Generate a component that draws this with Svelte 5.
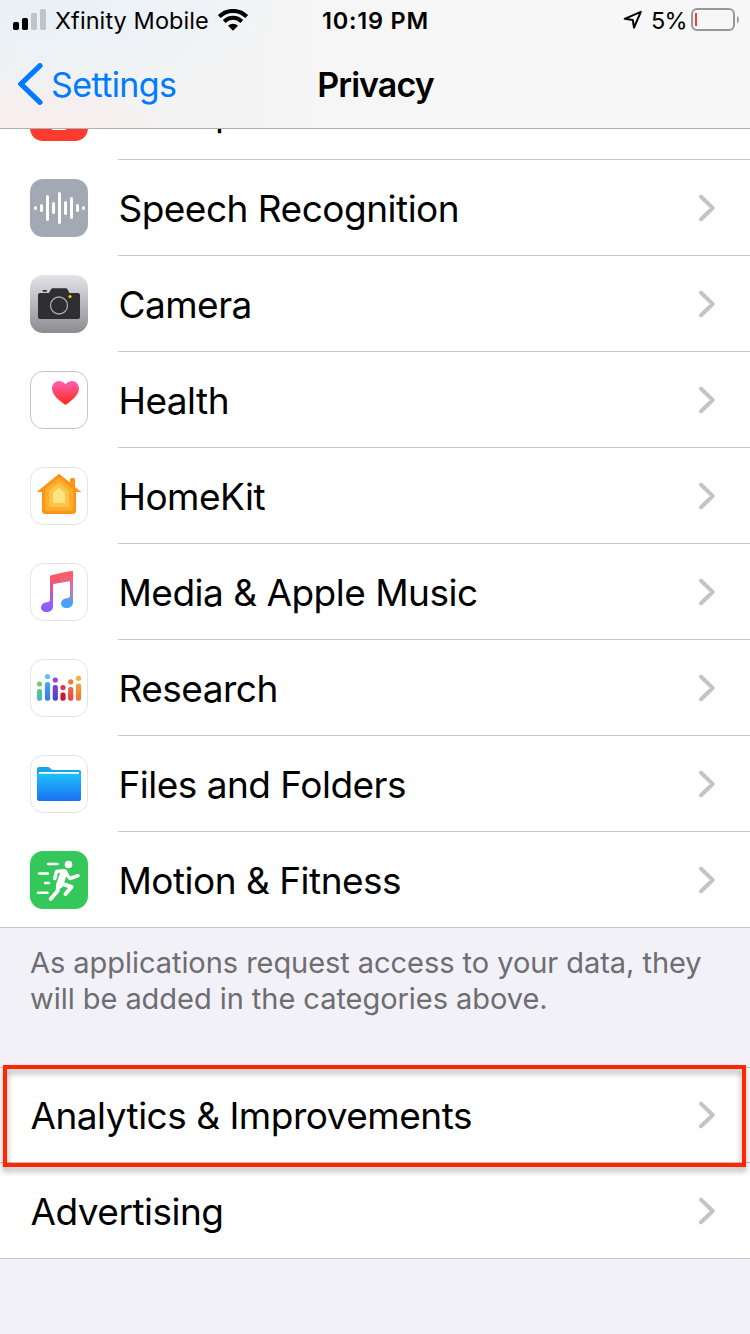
<script>
	const rows = [
		{ icon: 'microphone', label: 'Microphone' },
		{ icon: 'speech', label: 'Speech Recognition' },
		{ icon: 'camera', label: 'Camera' },
		{ icon: 'health', label: 'Health' },
		{ icon: 'home', label: 'HomeKit' },
		{ icon: 'music', label: 'Media & Apple Music' },
		{ icon: 'research', label: 'Research' },
		{ icon: 'files', label: 'Files and Folders' },
		{ icon: 'motion', label: 'Motion & Fitness' }
	];

	// x, half height
	const wave = [
		[5.5, 2], [11.5, 4], [17.5, 13], [23.5, 6], [29.5, 16],
		[35.5, 7], [41.5, 11], [47.5, 4], [53.5, 2]
	];

	// x, dot y, bar top, bar fill, dot fill
	const people = [
		[9.5, 25, 30, 'url(#r1)', '#6fce75'],
		[17.5, 17.5, 23, 'url(#r2)', '#5ac3ef'],
		[25.3, 21, 26, 'url(#r3)', '#9746d1'],
		[33, 28.5, 33.5, '#c81634', '#df3450'],
		[40.7, 22.8, 28, 'url(#r4)', '#ed793a'],
		[48.5, 19.3, 24.5, 'url(#r5)', '#f4b13b']
	];
</script>

{#snippet chevron()}
	<svg class="chevron" width="18" height="28" viewBox="0 0 18 28">
		<path d="M3 2.7 14.8 14 3 25.3" fill="none" stroke="#c4c4c6" stroke-width="4" stroke-linecap="round" stroke-linejoin="round" />
	</svg>
{/snippet}

<div class="screen">
	<header>
		<div class="status">
			<div class="carrier">
				<svg width="34" height="22" viewBox="0 0 34 22">
					<rect x="0" y="13" width="6" height="8" rx="1.7" />
					<rect x="9" y="9" width="6" height="12" rx="1.7" />
					<rect x="18" y="4" width="6" height="17" rx="1.7" fill="#bfc4c7" />
					<rect x="27" y="0" width="6" height="21" rx="1.7" fill="#bfc4c7" />
				</svg>
				<span>Xfinity Mobile</span>
				<svg class="wifi" width="30" height="22" viewBox="0 0 30 22">
					<g fill="none" stroke="#000" stroke-width="4">
						<path d="M1.3 7.6a19.3 19.3 0 0 1 27.4 0" />
						<path d="M6.2 12.5a12.4 12.4 0 0 1 17.6 0" />
					</g>
					<path d="m15 21.7-5-5a7.1 7.1 0 0 1 10 0z" />
				</svg>
			</div>
			<div class="time">10:19 PM</div>
			<div class="power">
				<svg class="location" width="20" height="20" viewBox="0 0 20 20">
					<path d="M1.7 8.8 17.8 1.8 11 17.7 9.8 10z" fill="none" stroke="#000" stroke-width="2" stroke-linejoin="round" />
				</svg>
				<span>5%</span>
				<svg width="49" height="24" viewBox="0 0 49 24">
					<rect x="1" y="1" width="42" height="21" rx="5" fill="none" stroke="#98989a" stroke-width="2" />
					<rect x="4" y="5" width="2" height="13" fill="#ff3b30" />
					<path d="M46 8q2 1.2 2 3.7t-2 3.7z" fill="#98989a" />
				</svg>
			</div>
		</div>
		<nav>
			<a href="#settings">
				<svg width="26" height="42" viewBox="0 0 26 42">
					<path d="M22 2.7 3 21l19 18.3" fill="none" stroke="#007aff" stroke-width="5.2" stroke-linecap="round" stroke-linejoin="miter" />
				</svg>
				<span>Settings</span>
			</a>
			<h1>Privacy</h1>
		</nav>
	</header>

	<main>
		<ul class="apps">
			{#each rows as row}
				<li>
					<svg class="icon {row.icon}" width="58" height="58" viewBox="0 0 58 58">
						{#if row.icon === 'microphone'}
							<rect width="58" height="58" rx="13" fill="#ff3b30" />
							<rect x="22" y="8" width="14" height="25" rx="7" fill="#fff" />
							<path d="M17 26c0 16 24 16 24 0M29 38v8M22 45.5h14" fill="none" stroke="#fff" stroke-width="3" />
						{:else if row.icon === 'speech'}
							<rect width="58" height="58" rx="13" fill="#a2a9b3" />
							{#each wave as [x, h]}
								<rect x={x - 1.5} y={29 - h} width="3" height={h * 2} rx="1.5" fill="#fff" />
							{/each}
						{:else if row.icon === 'camera'}
							<defs>
								<linearGradient id="cam" x2="0" y2="1">
									<stop stop-color="#e4e3ea" />
									<stop offset="1" stop-color="#8d8b91" />
								</linearGradient>
							</defs>
							<rect width="58" height="58" rx="13" fill="url(#cam)" />
							<path d="M10 18h8.5c1.5 0 2-4.7 4-4.7H36c2 0 2.5 4.7 4 4.7h8a2 2 0 0 1 2 2v22a2 2 0 0 1-2 2H10a2 2 0 0 1-2-2V20a2 2 0 0 1 2-2z" fill="#2f2e30" />
							<rect x="12.5" y="15" width="4.5" height="1.8" rx=".8" fill="#2f2e30" />
							<circle cx="29" cy="30.5" r="8.5" fill="none" stroke="#aaa9ad" stroke-width="1.3" />
							<circle cx="40" cy="21.5" r="1.6" fill="#ffcc00" />
						{:else if row.icon === 'health'}
							<defs>
								<linearGradient id="heart" x2="0" y2="1">
									<stop stop-color="#ff62b4" />
									<stop offset="1" stop-color="#ff2718" />
								</linearGradient>
							</defs>
							<rect x=".5" y=".5" width="57" height="57" rx="12.5" fill="#fff" stroke="#c6c6c8" />
							<path d="M35.500 34C28 28.500 22 23.500 22 17.500c0-4.500 3.300-7.600 7-7.600 2.700 0 5 1.300 6.500 3.400 1.500-2.100 3.800-3.400 6.500-3.400 3.700 0 7 3.100 7 7.600 0 6-6 11-13.500 16.500z" fill="url(#heart)" />
						{:else if row.icon === 'home'}
							<rect x=".5" y=".5" width="57" height="57" rx="12.5" fill="#fff" stroke="#e5e5e5" />
							<path d="M29 6.800 40 15.500v-3q0-1.500 1.500-1.500h2q1.500 0 1.500 1.500v7.500l6.300 5H46v18.500q0 3.500-3.500 3.500h-27q-3.500 0-3.500-3.500V25H6.700z" fill="#fb9418" />
							<path d="M29 11 43 22v19.500q0 2.500-2.500 2.500h-23q-2.500 0-2.500-2.500V22z" fill="#fead2b" />
							<path d="m29 15.500 10 8.200V39q0 1-1 1H20q-1 0-1-1V23.700z" fill="#fec44a" />
							<path d="m29 20.800 6 5V36H23V25.800z" fill="#fee582" />
						{:else if row.icon === 'music'}
							<defs>
								<linearGradient id="stem" x2="0" y2="1">
									<stop offset=".1" stop-color="#fc5863" />
									<stop offset=".8" stop-color="#9a5cf4" />
									<stop offset="1" stop-color="#855dff" />
								</linearGradient>
								<linearGradient id="stem2" x2="0" y2="1">
									<stop offset=".1" stop-color="#fd5b61" />
									<stop offset=".5" stop-color="#c478bc" />
									<stop offset=".9" stop-color="#42a4fa" />
								</linearGradient>
							</defs>
							<rect x=".5" y=".5" width="57" height="57" rx="12.5" fill="#fff" stroke="#e5e5e5" />
							<path d="M20 13.500q0-1 1-1.300L31 10v9.500l-7 1.500q-1 .3-1 1.300V43c0 4-3 6-6.500 6-3.300 0-5.500-2-5.500-4.600 0-3 2.300-4.700 5.500-5.200 2.500-.3 3.500-.7 3.500-2.700z" fill="url(#stem)" />
							<path d="m30.500 10.100 11-2.200q1.500-.3 1.500 1.200v30c0 4-3 6-6.500 6-3.300 0-5.500-2-5.500-4.600 0-3 2.300-4.700 5.500-5.200 2.500-.3 3.500-.7 3.500-2.700V19q0-1-1-.8l-8.500 1.700z" fill="url(#stem2)" />
						{:else if row.icon === 'research'}
							<defs>
								<linearGradient id="r1" x2="0" y2="1"><stop stop-color="#64c68c" /><stop offset="1" stop-color="#4faec5" /></linearGradient>
								<linearGradient id="r2" x2="0" y2="1"><stop stop-color="#4ba8f0" /><stop offset="1" stop-color="#3374ed" /></linearGradient>
								<linearGradient id="r3" x2="0" y2="1"><stop stop-color="#873dcd" /><stop offset="1" stop-color="#4047ce" /></linearGradient>
								<linearGradient id="r4" x2="0" y2="1"><stop stop-color="#ed6b3a" /><stop offset="1" stop-color="#eb404c" /></linearGradient>
								<linearGradient id="r5" x2="0" y2="1"><stop stop-color="#f1a33b" /><stop offset="1" stop-color="#ef7334" /></linearGradient>
							</defs>
							<rect x=".5" y=".5" width="57" height="57" rx="12.5" fill="#fff" stroke="#e5e5e5" />
							{#each people as [x, dot, top, bar, head]}
								<circle cx={x} cy={dot} r="2.6" fill={head} />
								<rect x={x - 2.6} y={top} width="5.2" height={41.7 - top} rx="2.2" fill={bar} />
							{/each}
						{:else if row.icon === 'files'}
							<defs>
								<linearGradient id="folder" x2="0" y2="1">
									<stop stop-color="#1bc1fb" />
									<stop offset="1" stop-color="#1d70f2" />
								</linearGradient>
							</defs>
							<rect x=".5" y=".5" width="57" height="57" rx="12.5" fill="#fff" stroke="#e5e5e5" />
							<path d="M7 20v-6q0-2 2-2h9c2.500 0 2.500 3 5 3h26q2 0 2 2v5z" fill="#17a5ea" />
							<rect x="9" y="17" width="40" height="3" fill="#fff" />
							<path d="M7 18.800h44V44q0 2-2 2H9q-2 0-2-2z" fill="url(#folder)" />
						{:else}
							<rect width="58" height="58" rx="13" fill="#34c759" />
							<circle cx="38.500" cy="13.500" r="3.800" fill="#fff" />
							<g fill="none" stroke="#fff" stroke-linecap="round" stroke-linejoin="round">
								<path d="M18 13h9.500M9 22.500h9M15 32h4M8 41.700h9.500" stroke-width="2.5" />
								<path d="M24.800 27.500 26.500 20.500 34 19.800 40 27.500 48 24.700" stroke-width="3.5" />
								<path d="M34 21.500 29.500 34" stroke-width="7" />
								<path d="M31.500 32.500 41.500 36 35.500 43" stroke-width="4" />
								<path d="M28.500 34 27.500 40 20.700 48" stroke-width="4" />
							</g>
						{/if}
					</svg>
					<div class="cell">
						<span class="label">{row.label}</span>
						{@render chevron()}
					</div>
				</li>
			{/each}
		</ul>

		<p>As applications request access to your data, they<br />will be added in the categories above.</p>

		<ul class="links">
			<li class="analytics">
				<span class="label">Analytics &amp; Improvements</span>
				{@render chevron()}
				<div class="highlight"></div>
			</li>
			<li>
				<span class="label">Advertising</span>
				{@render chevron()}
			</li>
		</ul>
	</main>
</div>

<style>
	:global(body) {
		background: #f2f1f7;
	}

	.screen {
		width: 750px;
		height: 1334px;
		display: flex;
		flex-direction: column;
		overflow: hidden;
		background: #f2f1f7;
		color: #000;
		font-family: Inter, 'Liberation Sans', sans-serif;
	}

	svg {
		display: block;
		flex: none;
	}

	header {
		box-sizing: border-box;
		flex: none;
		height: 129px;
		border-bottom: 1px solid #b0b0b1;
		background:
			radial-gradient(ellipse 150px 75px at 30px 140px, #faecec 0%, #faecec00 100%),
			radial-gradient(ellipse 240px 110px at 40px 0, #e8f1f7 0%, #e8f1f700 100%),
			linear-gradient(to right, #f1f1f2, #f7f7f7 60%);
	}

	.status {
		display: grid;
		grid-template-columns: 1fr auto 1fr;
		align-items: center;
		height: 40px;
		padding: 0 10px 0 13px;
		font-size: 23.5px;
	}

	.carrier,
	.power {
		display: flex;
		align-items: center;
	}

	.carrier span {
		margin-left: 8px;
		letter-spacing: 0.08px;
	}

	.wifi {
		margin-left: 9px;
	}

	.time {
		font-weight: 600;
		letter-spacing: 0.8px;
		margin-right: 2px;
	}

	.power {
		justify-content: flex-end;
	}

	.location {
		margin-right: 8px;
	}

	.power span {
		margin-right: 4px;
		letter-spacing: -0.7px;
	}

	nav {
		display: grid;
		grid-template-columns: 1fr auto 1fr;
		align-items: center;
		height: 88px;
		padding: 0 17px 0 18px;
	}

	a {
		display: flex;
		align-items: center;
		gap: 7px;
		color: #007aff;
		font-size: 34px;
		letter-spacing: -0.6px;
		text-decoration: none;
	}

	h1 {
		margin: 0;
		font-size: 34px;
		font-weight: 600;
		letter-spacing: -0.95px;
	}

	main {
		flex: 1;
		overflow: hidden;
	}

	ul {
		margin: 0;
		padding: 0;
		list-style: none;
		background: #fff;
	}

	/* list is scrolled, the first row is mostly under the header */
	.apps {
		margin-top: -65px;
		border-bottom: 1px solid #c6c6c8;
	}

	.apps li {
		display: flex;
		align-items: center;
		gap: 30px;
		height: 96px;
		padding-left: 30px;
	}

	.apps li:last-child {
		height: 95px;
	}

	.cell {
		box-sizing: border-box;
		flex: 1;
		display: flex;
		align-items: center;
		justify-content: space-between;
		height: 100%;
		padding-right: 34px;
		border-bottom: 1px solid #c6c6c8;
	}

	li:last-child .cell {
		border-bottom: 0;
	}

	.label {
		font-size: 37px;
		line-height: 48px;
		letter-spacing: -0.5px;
		padding: 2px 0 0 0.4px;
		white-space: nowrap;
	}

	p {
		margin: 0;
		padding: 17px 30px 50px;
		color: #6d6d72;
		font-size: 29px;
		line-height: 36px;
		letter-spacing: -0.05px;
		white-space: nowrap;
	}

	.links {
		border-top: 1px solid #c6c6c8;
		border-bottom: 1px solid #c6c6c8;
	}

	.links li {
		position: relative;
		display: flex;
		align-items: center;
		justify-content: space-between;
		height: 95px;
		padding: 0 34px 0 30px;
	}

	.links .analytics {
		height: 94px;
		border-bottom: 1px solid #c6c6c8;
	}

	.highlight {
		box-sizing: border-box;
		position: absolute;
		left: 3px;
		top: -3px;
		width: 743px;
		height: 102px;
		border: 4px solid #ff2600;
		filter: drop-shadow(0 4px 3px rgba(0, 0, 0, 0.35));
	}
</style>
